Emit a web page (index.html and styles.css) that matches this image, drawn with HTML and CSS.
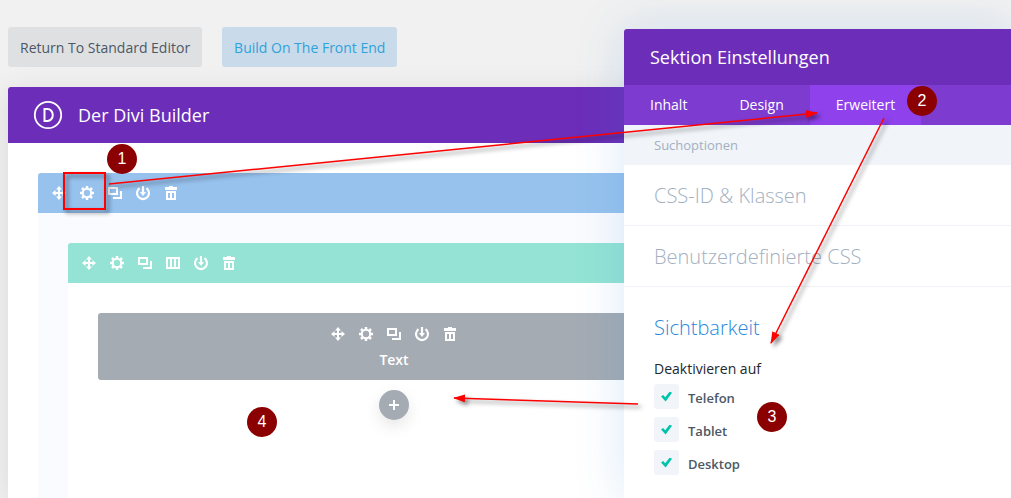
FILE: index.html
```html
<!DOCTYPE html>
<html lang="de">
<head>
    <meta charset="UTF-8">
    <meta name="viewport" content="width=device-width, initial-scale=1.0">
    <title>Der Divi Builder</title>
    <link rel="stylesheet" href="styles.css">
</head>
<body>
    <!-- Icon set -->
    <svg class="sprite" aria-hidden="true">
        <symbol id="icon-move" viewBox="0 0 16 16">
            <path d="M8 3v10M3 8h10" stroke="currentColor" stroke-width="2"/>
            <path d="M8 1l3 3.500H5zM8 15l3-3.500H5zM1 8l3.500-3v6zM15 8l-3.500-3v6z"/>
        </symbol>
        <symbol id="icon-gear" viewBox="0 0 16 16">
            <path d="M8 1v3M8 12v3M1 8h3M12 8h3M3 3l2.300 2.300M10.700 10.700L13 13M3 13l2.300-2.300M10.700 5.300L13 3" stroke="currentColor" stroke-width="2.500"/>
            <circle cx="8" cy="8" r="4.200" fill="none" stroke="currentColor" stroke-width="2"/>
        </symbol>
        <symbol id="icon-copy" viewBox="0 0 16 16">
            <path d="M2 3h8v6H2zM14 6v7H6" fill="none" stroke="currentColor" stroke-width="2"/>
        </symbol>
        <symbol id="icon-columns" viewBox="0 0 16 16">
            <path d="M2 3h12v10H2zM6 3v10M10 3v10" fill="none" stroke="currentColor" stroke-width="2"/>
        </symbol>
        <symbol id="icon-save" viewBox="0 0 16 16">
            <path d="M4.500 3.200A6 6 0 1 0 11.500 3.200M8 1v8" fill="none" stroke="currentColor" stroke-width="2.200"/>
            <path d="M5 7h6l-3 4z"/>
        </symbol>
        <symbol id="icon-trash" viewBox="0 0 16 16">
            <path d="M6 1h4v1h4v3H2V2h4z"/>
            <path d="M4 7h8v7H4zM8 7v7" fill="none" stroke="currentColor" stroke-width="2"/>
        </symbol>
        <symbol id="icon-plus" viewBox="0 0 16 16">
            <path d="M8 3v10M3 8h10" stroke="currentColor" stroke-width="2"/>
        </symbol>
    </svg>

    <main class="editor">
        <div class="editor-actions">
            <button type="button" class="btn">Return To Standard Editor</button>
            <button type="button" class="btn btn-front">Build On The Front End</button>
        </div>

        <section class="builder">
            <header class="bar">
                <svg class="logo" viewBox="0 0 30 30" aria-hidden="true">
                    <circle cx="15" cy="15" r="13.200" fill="none" stroke="currentColor" stroke-width="1.800"/>
                    <path d="M11.500 9h3a5.300 6 0 0 1 0 12h-3z" fill="none" stroke="currentColor" stroke-width="2"/>
                </svg>
                <h1>Der Divi Builder</h1>
            </header>

            <div class="canvas">
                <div class="block block-section">
                    <div class="tools">
                        <button type="button" aria-label="Verschieben"><svg><use href="#icon-move"/></svg></button>
                        <button type="button" aria-label="Einstellungen"><svg><use href="#icon-gear"/></svg></button>
                        <button type="button" aria-label="Duplizieren"><svg><use href="#icon-copy"/></svg></button>
                        <button type="button" aria-label="Speichern"><svg><use href="#icon-save"/></svg></button>
                        <button type="button" aria-label="Löschen"><svg><use href="#icon-trash"/></svg></button>
                    </div>
                    <div class="block block-row">
                        <div class="tools">
                            <button type="button" aria-label="Verschieben"><svg><use href="#icon-move"/></svg></button>
                            <button type="button" aria-label="Einstellungen"><svg><use href="#icon-gear"/></svg></button>
                            <button type="button" aria-label="Duplizieren"><svg><use href="#icon-copy"/></svg></button>
                            <button type="button" aria-label="Spalten"><svg><use href="#icon-columns"/></svg></button>
                            <button type="button" aria-label="Speichern"><svg><use href="#icon-save"/></svg></button>
                            <button type="button" aria-label="Löschen"><svg><use href="#icon-trash"/></svg></button>
                        </div>
                        <div class="module">
                            <div class="tools">
                                <button type="button" aria-label="Verschieben"><svg><use href="#icon-move"/></svg></button>
                                <button type="button" aria-label="Einstellungen"><svg><use href="#icon-gear"/></svg></button>
                                <button type="button" aria-label="Duplizieren"><svg><use href="#icon-copy"/></svg></button>
                                <button type="button" aria-label="Speichern"><svg><use href="#icon-save"/></svg></button>
                                <button type="button" aria-label="Löschen"><svg><use href="#icon-trash"/></svg></button>
                            </div>
                            <span>Text</span>
                        </div>
                        <button type="button" class="add" aria-label="Modul hinzufügen"><svg><use href="#icon-plus"/></svg></button>
                    </div>
                </div>
            </div>
        </section>
    </main>

    <!-- Settings modal -->
    <aside class="modal">
        <header class="modal-title">
            <h2>Sektion Einstellungen</h2>
        </header>
        <nav class="tabs">
            <a href="#">Inhalt</a>
            <a href="#">Design</a>
            <a href="#" class="active">Erweitert</a>
        </nav>
        <input class="search" type="text" placeholder="Suchoptionen" aria-label="Suchoptionen">
        <h3 class="toggle">CSS-ID &amp; Klassen</h3>
        <h3 class="toggle">Benutzerdefinierte CSS</h3>
        <section class="visibility">
            <h3>Sichtbarkeit</h3>
            <fieldset>
                <legend>Deaktivieren auf</legend>
                <label><input type="checkbox" checked>Telefon</label>
                <label><input type="checkbox" checked>Tablet</label>
                <label><input type="checkbox" checked>Desktop</label>
            </fieldset>
        </section>
    </aside>

    <!-- Step markers -->
    <svg class="arrows" aria-hidden="true">
        <defs>
            <marker id="head" markerUnits="userSpaceOnUse" markerWidth="12" markerHeight="8" refX="11" refY="4" orient="auto">
                <path d="M0 0l12 4-12 4z" fill="#f00"/>
            </marker>
        </defs>
        <rect x="64" y="173" width="41" height="36"/>
        <path d="M109 184L817 113" marker-end="url(#head)"/>
        <path d="M884 118L771 343" marker-end="url(#head)"/>
        <path d="M638 404L454 398" marker-end="url(#head)"/>
    </svg>
    <span class="step step-1">1</span>
    <span class="step step-2">2</span>
    <span class="step step-3">3</span>
    <span class="step step-4">4</span>
</body>
</html>
```
FILE: styles.css
```css
* {
    box-sizing: border-box;
}

body {
    font-family: 'Open Sans', 'Noto Sans', sans-serif;
    font-size: 14px;
    margin: 0;
    position: relative;
    background-color: #f1f1f1;
    color: #4c5866;
    overflow: hidden;
}

h1, h2, h3 {
    margin: 0;
    font-weight: 400;
}

button, input {
    font: inherit;
    border: none;
}

button {
    cursor: pointer;
}

.sprite {
    position: absolute;
    width: 0;
    height: 0;
}

/* Editor */
.editor {
    display: flex;
    flex-direction: column;
    min-height: 100vh;
    padding: 27px 231px 0 8px;
}

.editor-actions {
    display: flex;
    gap: 20px;
    margin-bottom: 20px;
}

.btn {
    height: 40px;
    padding: 0 12px;
    border-radius: 3px;
    background-color: #dfe0e2;
    color: #4c5866;
    font-weight: 500;
}

.btn-front {
    background-color: #c9daea;
    color: #2ea3db;
}

.builder {
    flex: 1;
    display: flex;
    flex-direction: column;
    border-radius: 3px 3px 0 0;
    background-color: #fff;
    box-shadow: 0 5px 30px rgba(0, 0, 0, 0.1);
}

.bar {
    display: flex;
    align-items: center;
    gap: 15px;
    height: 56px;
    padding: 0 25px;
    border-radius: 3px 3px 0 0;
    background-color: #6c2eb9;
    color: #fff;
}

.bar h1, .modal-title h2 {
    font-size: 18px;
}

.logo {
    width: 30px;
    height: 30px;
}

/* Nested blocks */
.canvas {
    flex: 1;
    display: flex;
    flex-direction: column;
    padding: 30px 30px 0;
}

.block {
    flex: 1;
    display: flex;
    flex-direction: column;
    border-radius: 3px 3px 0 0;
}

.block > .tools {
    height: 40px;
    padding: 0 7px;
    border-radius: 3px 3px 0 0;
}

.block-section {
    background-color: #fafbfe;
}

.block-section > .tools {
    background-color: #97c2ee;
}

.block-row {
    margin: 30px 30px 0;
    background-color: #fff;
}

.block-row > .tools {
    background-color: #94e3d4;
}

.tools {
    display: flex;
    align-items: center;
}

.tools button {
    display: flex;
    justify-content: center;
    width: 28px;
    padding: 0;
    background: none;
    color: #fff;
}

.tools svg, .add svg {
    width: 16px;
    height: 16px;
    fill: currentColor;
}

.module {
    display: flex;
    flex-direction: column;
    align-items: center;
    gap: 8px;
    margin: 30px 30px 10px;
    padding: 13px 0 10px;
    border-radius: 3px;
    background-color: #a4abb3;
    color: #fff;
    font-weight: 600;
    line-height: 20px;
}

.add {
    display: flex;
    align-items: center;
    justify-content: center;
    align-self: center;
    width: 30px;
    height: 30px;
    padding: 0;
    border-radius: 50%;
    background-color: #a4abb3;
    color: #fff;
    box-shadow: 0 6px 16px rgba(0, 0, 0, 0.1);
}

/* Settings modal */
.modal {
    position: absolute;
    top: 29px;
    right: 0;
    bottom: 0;
    width: 387px;
    border-radius: 3px 0 0 0;
    background-color: #fff;
    box-shadow: 0 0 50px rgba(43, 135, 218, 0.18);
}

.modal-title {
    display: flex;
    align-items: center;
    height: 56px;
    padding: 0 26px;
    border-radius: 3px 0 0 0;
    background-color: #6c2eb9;
    color: #fff;
}

.tabs {
    display: flex;
    background-color: #7e3bd0;
}

.tabs a {
    padding: 0 26px;
    line-height: 40px;
    color: #fff;
    font-weight: 500;
    text-decoration: none;
}

.tabs a.active {
    background-color: #8f42ec;
}

.search {
    display: block;
    width: 100%;
    height: 40px;
    padding: 0 30px;
    background-color: #f1f4f9;
    font-size: 13px;
    font-weight: 500;
}

.search::placeholder {
    color: #a2b0c1;
}

.modal h3 {
    font-size: 20px;
    font-weight: 300;
}

.toggle {
    padding: 2px 30px 0;
    border-bottom: 1px solid #eff3f8;
    color: #a2b0c1;
    line-height: 58px;
}

.visibility {
    padding: 26px 30px;
}

.visibility h3 {
    color: #2b87da;
    line-height: 30px;
}

fieldset {
    display: flex;
    flex-direction: column;
    gap: 4px;
    margin: 16px 0 0;
    padding: 0;
    border: none;
}

legend {
    padding: 0;
    margin-bottom: 5px;
    color: #23282d;
    font-weight: 500;
    line-height: 20px;
}

fieldset label {
    display: flex;
    align-items: flex-start;
    gap: 9px;
    font-size: 13px;
    font-weight: 600;
    line-height: 29px;
}

fieldset input {
    appearance: none;
    display: flex;
    align-items: center;
    justify-content: center;
    width: 25px;
    height: 25px;
    margin: 0;
    border-radius: 3px;
    background-color: #f1f5f9;
}

fieldset input:checked::before {
    content: '';
    width: 11px;
    height: 10px;
    background-color: #00c3aa;
    clip-path: polygon(0 50%, 20% 36%, 38% 58%, 80% 0, 100% 12%, 42% 100%);
}

/* Step markers */
.arrows {
    position: absolute;
    top: 0;
    left: 0;
    width: 100%;
    height: 100%;
    fill: none;
    stroke: #f00;
    stroke-width: 1.5;
    pointer-events: none;
    filter: drop-shadow(3px 3px 2px rgba(0, 0, 0, 0.5));
}

.arrows rect {
    stroke-width: 2;
}

.arrows marker {
    stroke: none;
}

.step {
    position: absolute;
    width: 30px;
    border-radius: 50%;
    background-color: #8b0000;
    color: #fff;
    font-family: 'Liberation Sans', sans-serif;
    font-size: 16px;
    line-height: 30px;
    text-align: center;
}

.step-1 {
    top: 144px;
    left: 107px;
}

.step-2 {
    top: 86px;
    left: 907px;
}

.step-3 {
    top: 402px;
    left: 757px;
}

.step-4 {
    top: 407px;
    left: 247px;
}
```
